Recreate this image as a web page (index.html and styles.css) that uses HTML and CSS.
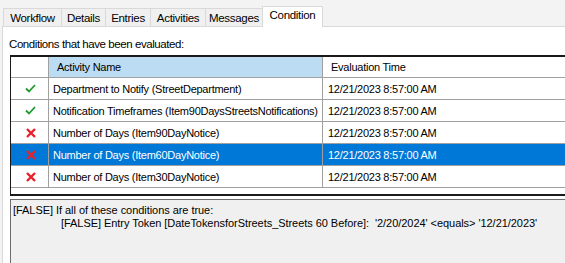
FILE: index.html
```html
<!DOCTYPE html>
<html>
<head>
<meta charset="utf-8">
<link rel="stylesheet" href="styles.css">
</head>
<body>
<div class="window">
  <div class="tabs">
    <div class="tab t-workflow">Workflow</div>
    <div class="tab t-details">Details</div>
    <div class="tab t-entries">Entries</div>
    <div class="tab t-activities">Activities</div>
    <div class="tab t-messages">Messages</div>
    <div class="tab active t-condition">Condition</div>
  </div>
  <div class="panel">
    <div class="label">Conditions that have been evaluated:</div>
    <div class="grid">
      <table>
        <thead>
          <tr><th class="c-icon"></th><th class="c-name">Activity Name</th><th class="c-time">Evaluation Time</th></tr>
        </thead>
        <tbody>
          <tr><td class="c-icon"><svg viewBox="0 0 11 9" width="11" height="9"><path d="M1 4.5 L4 7.5 L10 1" fill="none" stroke="#1e9a2e" stroke-width="1.8"/></svg></td><td>Department to Notify (StreetDepartment)</td><td class="c-time">12/21/2023 8:57:00 AM</td></tr>
          <tr><td class="c-icon"><svg viewBox="0 0 11 9" width="11" height="9"><path d="M1 4.5 L4 7.5 L10 1" fill="none" stroke="#1e9a2e" stroke-width="1.8"/></svg></td><td>Notification Timeframes (Item90DaysStreetsNotifications)</td><td class="c-time">12/21/2023 8:57:00 AM</td></tr>
          <tr><td class="c-icon"><svg viewBox="0 0 10 10" width="10" height="10"><path d="M1 1 L9 9 M9 1 L1 9" stroke="#e8202a" stroke-width="2.4"/></svg></td><td>Number of Days (Item90DayNotice)</td><td class="c-time">12/21/2023 8:57:00 AM</td></tr>
          <tr class="sel"><td class="c-icon"><svg viewBox="0 0 10 10" width="10" height="10"><path d="M1 1 L9 9 M9 1 L1 9" stroke="#e8202a" stroke-width="2.4"/></svg></td><td>Number of Days (Item60DayNotice)</td><td class="c-time">12/21/2023 8:57:00 AM</td></tr>
          <tr><td class="c-icon"><svg viewBox="0 0 10 10" width="10" height="10"><path d="M1 1 L9 9 M9 1 L1 9" stroke="#e8202a" stroke-width="2.4"/></svg></td><td>Number of Days (Item30DayNotice)</td><td class="c-time">12/21/2023 8:57:00 AM</td></tr>
        </tbody>
      </table>
    </div>
    <div class="details">
      <div>[FALSE] If all of these conditions are true:</div>
      <div class="indent">[FALSE] Entry Token [DateTokensforStreets_Streets 60 Before]:&nbsp; '2/20/2024' &lt;equals&gt; '12/21/2023'</div>
    </div>
  </div>
</div>
</body>
</html>
```

FILE: styles.css
```css
html, body {
  margin: 0;
  padding: 0;
  width: 565px;
  height: 263px;
  overflow: hidden;
  background: #f3f3f3;
}
.window {
  display: flex;
  flex-direction: column;
  height: 263px;
  font-family: "Liberation Sans", Arial, sans-serif;
  color: #000;
}
.tabs {
  display: flex;
  align-items: flex-end;
  padding: 6px 0 0 3px;
  height: 20px;
  position: relative;
  z-index: 1;
}
.tab {
  height: 17px;
  box-sizing: content-box;
  border: 1px solid #d9d9d9;
  border-bottom: none;
  border-right: none;
  background: #f0f0f0;
  font-size: 11.5px;
  letter-spacing: -0.3px;
  line-height: 18px;
  text-align: center;
  color: #000;
}
.t-workflow { width: 57px; }
.t-details { width: 43px; }
.t-entries { width: 44px; }
.t-activities { width: 54px; }
.t-messages { width: 56px; border-right: 1px solid #d9d9d9; }
.tab.active {
  width: 59px;
  height: 20px;
  background: #fff;
  border: 1px solid #d9d9d9;
  border-bottom: none;
  line-height: 17px;
  margin-left: -1px;
  margin-bottom: -1px;
}
.panel {
  flex: 1;
  background: #fff;
  border-top: 1px solid #d9d9d9;
  border-left: 1px solid #d9d9d9;
  margin-left: 2px;
  padding: 0 0 0 6px;
  display: flex;
  flex-direction: column;
}
.label {
  font-size: 11.5px;
  letter-spacing: -0.42px;
  line-height: 14px;
  margin: 10px 0 0 0;
  height: 18px;
}
.grid {
  height: 137px;
  border-top: 2px solid #1a1a1a;
  border-left: 1px solid #1a1a1a;
  border-bottom: 2px solid #1a1a1a;
  margin-left: 1px;
  background: #fff;
}
table {
  border-collapse: collapse;
  font-size: 11px;
  letter-spacing: -0.25px;
  table-layout: fixed;
  width: 600px;
}
th, td {
  padding: 0 0 0 4px;
  text-align: left;
  font-weight: normal;
  white-space: nowrap;
  overflow: hidden;
  height: 21px;
  border-right: 1px solid #a0a0a0;
  border-bottom: 1px solid #a0a0a0;
}
th {
  height: 20px;
  padding-left: 8px;
}
th.c-name { background: #bcdcf4; }
td.c-time { padding-left: 5px; }
.c-icon { width: 37px; padding: 0; text-align: center; }
th.c-icon { padding: 0; }
.c-name { width: 265px; }
td.c-icon svg { display: block; margin: 0 auto; position: relative; left: 1px; }
tr.sel td { background: #0078d7; color: #fff; }
.details {
  margin-top: 3px;
  margin-left: 1px;
  flex: 1;
  background: #f0f0f0;
  border-top: 1px solid #6d6d6d;
  border-left: 1px solid #6d6d6d;
  font-size: 11px;
  letter-spacing: -0.05px;
  line-height: 13px;
  padding: 4px 0 0 2px;
}
.indent { padding-left: 48px; }
```
